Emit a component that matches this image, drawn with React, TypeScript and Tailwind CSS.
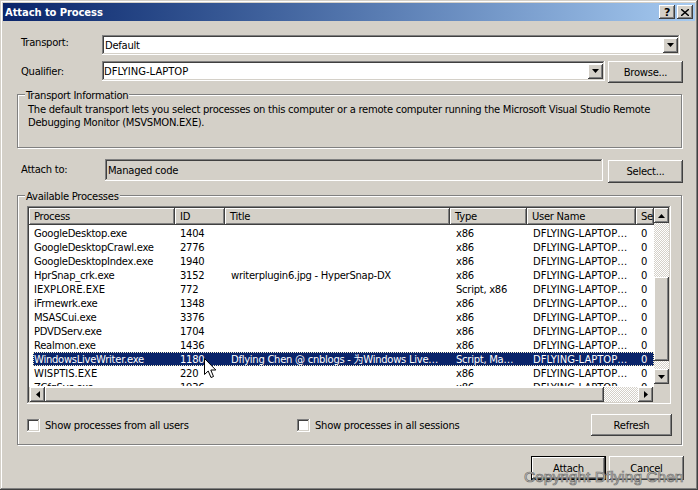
const raised = 'shadow-[inset_-1px_-1px_#404040,inset_1px_1px_#ffffff,inset_-2px_-2px_#808080]';
const sunken = 'shadow-[inset_-1px_-1px_#ffffff,inset_1px_1px_#808080,inset_-2px_-2px_#d4d0c8,inset_2px_2px_#404040]';
const checker = '[background:repeating-conic-gradient(#ffffff_0_25%,#d4d0c8_0_50%)_0_0/2px_2px]';

const columns = [
  { name: 'Process', width: 'w-[146px]' },
  { name: 'ID', width: 'w-[50px]' },
  { name: 'Title', width: 'w-[225px]' },
  { name: 'Type', width: 'w-[77px]' },
  { name: 'User Name', width: 'w-[109px]' },
  { name: 'Se', width: 'w-[18px]' },
];

const user = 'DFLYING-LAPTOP…';

const processes = [
  ['GoogleDesktop.exe', '1404', '', 'x86'],
  ['GoogleDesktopCrawl.exe', '2776', '', 'x86'],
  ['GoogleDesktopIndex.exe', '1940', '', 'x86'],
  ['HprSnap_crk.exe', '3152', 'writerplugin6.jpg - HyperSnap-DX', 'x86'],
  ['IEXPLORE.EXE', '772', '', 'Script, x86'],
  ['iFrmewrk.exe', '1348', '', 'x86'],
  ['MSASCui.exe', '3376', '', 'x86'],
  ['PDVDServ.exe', '1704', '', 'x86'],
  ['Realmon.exe', '1436', '', 'x86'],
  ['WindowsLiveWriter.exe', '1180', 'Dflying Chen @ cnblogs - 为Windows Live…', 'Script, Ma…'],
  ['WISPTIS.EXE', '220', '', 'x86'],
  ['ZCfgSvc.exe', '1936', '', 'x86'],
];

function Arrow({ dir }: { dir: 'up' | 'down' | 'left' | 'right' }) {
  const points = {
    up: '3.5,0 0,4 7,4',
    down: '0,0 7,0 3.5,4',
    left: '4,0 4,7 0,3.5',
    right: '0,0 0,7 4,3.5',
  }[dir];
  const vertical = dir === 'up' || dir === 'down';
  return (
    <svg width={vertical ? 7 : 4} height={vertical ? 4 : 7} viewBox={vertical ? '0 0 7 4' : '0 0 4 7'}>
      <polygon points={points} fill="#000000" />
    </svg>
  );
}

function ScrollButton({ dir }: { dir: 'up' | 'down' | 'left' | 'right' }) {
  return (
    <div className={`w-[15px] h-[15px] shrink-0 bg-[#d4d0c8] flex items-center justify-center ${raised}`}>
      <Arrow dir={dir} />
    </div>
  );
}

function Button({ label, className }: { label: string; className: string }) {
  return (
    <div className={`flex items-center justify-center shrink-0 bg-[#d4d0c8] ${raised} ${className}`}>
      {label}
    </div>
  );
}

function Checkbox({ label, className }: { label: string; className: string }) {
  return (
    <div className={`flex items-center gap-[5px] ${className}`}>
      <div className={`w-[13px] h-[13px] bg-white ${sunken}`} />
      <span>{label}</span>
    </div>
  );
}

function Group({ title, className, children }: { title: string; className: string; children: React.ReactNode }) {
  return (
    <div className={`relative w-[665px] border border-[#808080] shadow-[1px_1px_#ffffff,inset_1px_1px_#ffffff] ${className}`}>
      <span className="absolute left-[7px] top-[-6px] px-[1px] leading-[13px] bg-[#d4d0c8]">{title}</span>
      {children}
    </div>
  );
}

export default function App() {
  return (
    <div className="relative w-[698px] h-[490px] overflow-hidden bg-[#d4d0c8] text-[10px] leading-[13px] tracking-[-0.27px] text-black font-['DejaVu_Sans',sans-serif] shadow-[inset_-1px_-1px_#404040,inset_1px_1px_#d4d0c8,inset_-2px_-2px_#808080,inset_2px_2px_#ffffff]">
      {/* Title bar */}
      <div className="mx-[3px] mt-[3px] h-[18px] flex items-center justify-between pl-[2px] pr-[2px] bg-gradient-to-r from-[#0a246a] to-[#a6caf0]">
        <span className="font-bold text-white tracking-[-0.1px]">Attach to Process</span>
        <div className="flex gap-[2px]">
          <div className={`w-[16px] h-[14px] bg-[#d4d0c8] flex items-center justify-center font-bold text-[11px] ${raised}`}>?</div>
          <div className={`w-[16px] h-[14px] bg-[#d4d0c8] flex items-center justify-center ${raised}`}>
            <svg width="8" height="7" viewBox="0 0 8 7">
              <path d="M0 0 L8 7 M8 0 L0 7" stroke="#000000" strokeWidth="1.4" />
            </svg>
          </div>
        </div>
      </div>

      <div className="ml-[17px] w-[667px]">
        {/* Transport */}
        <div className="mt-[14px] h-[20px] flex items-start">
          <span className="w-[85px] pl-[4px] shrink-0 mt-[1px]">Transport:</span>
          <div className={`w-[578px] h-[20px] bg-white flex items-center justify-between pl-[3px] pr-[2px] ${sunken}`}>
            <span>Default</span>
            <ScrollButton dir="down" />
          </div>
        </div>

        {/* Qualifier */}
        <div className="mt-[6px] h-[22px] flex items-start">
          <span className="w-[85px] pl-[4px] shrink-0 mt-[4px]">Qualifier:</span>
          <div className={`w-[503px] h-[20px] bg-white flex items-center justify-between pl-[2px] pr-[2px] ${sunken}`}>
            <span className="tracking-normal">DFLYING-LAPTOP</span>
            <ScrollButton dir="down" />
          </div>
          <Button label="Browse..." className="ml-[3px] w-[75px] h-[22px]" />
        </div>

        {/* Transport info */}
        <Group title="Transport Information" className="mt-[11px] h-[54px] pt-[8px] pl-[10px]">
          <p className="whitespace-nowrap">The default transport lets you select processes on this computer or a remote computer running the Microsoft Visual Studio Remote</p>
          <p>Debugging Monitor (MSVSMON.EXE).</p>
        </Group>

        {/* Attach to */}
        <div className="mt-[11px] h-[24px] flex items-start">
          <span className="w-[88px] pl-[4px] shrink-0 mt-[4px]">Attach to:</span>
          <div className={`w-[498px] h-[22px] flex items-center pl-[3px] ${sunken}`}>Managed code</div>
          <Button label="Select..." className="ml-[5px] mt-[1px] w-[75px] h-[23px]" />
        </div>

        {/* Available processes */}
        <Group title="Available Processes" className="mt-[12px] h-[250px] pt-[10px] pl-[9px]">
          <div className={`w-[644px] h-[198px] p-[2px] flex bg-white ${sunken}`}>
            <div className="w-[625px] h-[194px] flex flex-col">
              <div className="flex h-[17px] shrink-0 bg-[#d4d0c8]">
                {columns.map((col) => (
                  <div key={col.name} className={`${col.width} h-[17px] pl-[5px] pt-[2px] overflow-hidden ${raised}`}>
                    {col.name}
                  </div>
                ))}
              </div>
              <div className="h-[161px] overflow-hidden pt-[1px] bg-white shrink-0">
                {processes.map(([name, id, title, type]) => {
                  const selected = name === 'WindowsLiveWriter.exe';
                  const upper = name === name.toUpperCase();
                  return (
                    <div
                      key={name}
                      className={`ml-[4px] flex h-[14px] items-center whitespace-nowrap font-['DejaVu_Sans','Noto_Sans_CJK_SC',sans-serif] ${
                        selected ? 'bg-[#0a246a] text-white outline-1 outline-dotted -outline-offset-1 outline-[#f5efc8]' : ''
                      }`}
                    >
                      <span className={`w-[142px] pl-[1px] ${upper ? 'tracking-normal' : ''}`}>{name}</span>
                      <span className="w-[50px] pl-[5px]">{id}</span>
                      <span className="w-[225px] pl-[6px]">{title}</span>
                      <span className="w-[77px] pl-[6px]">{type}</span>
                      <span className="w-[109px] pl-[6px] tracking-normal">{user}</span>
                      <span className="w-[18px] pl-[5px]">0</span>
                    </div>
                  );
                })}
              </div>
              {/* Horizontal scrollbar */}
              <div className="h-[15px] flex shrink-0 bg-[#d4d0c8] pl-[1px] border-t border-white box-content">
                <ScrollButton dir="left" />
                <div className={`w-[559px] h-[15px] bg-[#d4d0c8] ${raised}`} />
                <div className={`w-[34px] h-[15px] ${checker}`} />
                <ScrollButton dir="right" />
              </div>
            </div>

            {/* Vertical scrollbar */}
            <div className="w-[15px] h-[194px] flex flex-col bg-[#d4d0c8]">
              <ScrollButton dir="up" />
              <div className={`h-[54px] ${checker}`} />
              <div className={`h-[84px] bg-[#d4d0c8] ${raised}`} />
              <div className={`h-[8px] ${checker}`} />
              <ScrollButton dir="down" />
            </div>
          </div>

          <div className="mt-[10px] h-[22px] w-[645px] flex items-center">
            <Checkbox label="Show processes from all users" className="w-[270px]" />
            <Checkbox label="Show processes in all sessions" className="w-[294px]" />
            <Button label="Refresh" className="w-[81px] h-[22px]" />
          </div>
        </Group>

        {/* Footer buttons */}
        <div className="mt-[11px] flex justify-end gap-[3px]">
          <Button label="Attach" className="w-[75px] h-[24px] border border-black" />
          <Button label="Cancel" className="w-[75px] h-[24px]" />
        </div>
      </div>

      {/* Watermark */}
      <span className="absolute left-[524px] top-[468px] text-[15.5px] leading-[18px] tracking-normal whitespace-nowrap text-[#d4d0c8] font-['Liberation_Sans',sans-serif] [-webkit-text-stroke:0.7px_#6f6f6f]">
        Copyright Dflying Chen
      </span>

      {/* Mouse pointer */}
      <svg className="absolute left-[204px] top-[358px]" width="13" height="21" viewBox="0 0 13 21">
        <path d="M0.5 0.5 V16.5 L4.2 13 L7 19.5 L9.5 18.5 L6.8 12 H11.8 Z" fill="#ffffff" stroke="#000000" strokeWidth="1" />
      </svg>
    </div>
  );
}
